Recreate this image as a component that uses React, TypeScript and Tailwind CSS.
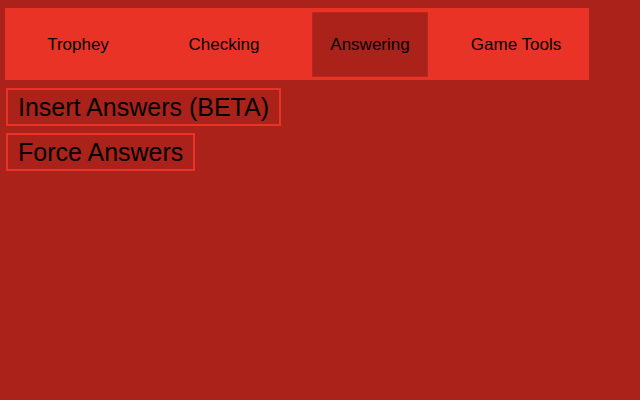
const tabs = ["Trophey", "Checking", "Answering", "Game Tools"];

export default function App() {
    const active = "Answering";

    return (
        <div className="w-[640px] h-[400px] bg-[#aa221a] pt-2 pl-[5px] font-['Liberation_Sans',Arial,sans-serif] text-black">
            <nav className="w-[584px] h-[72px] bg-[#ea3327] flex items-center gap-[30px] px-[15px]">
                {tabs.map((tab) => (
                    <div
                        key={tab}
                        className={
                            "w-[116px] h-[65px] flex items-center justify-center text-[17px] pt-[2px] " +
                            (tab === active ? "bg-[#aa221a] border border-[#b8271e]" : "")
                        }
                    >
                        {tab}
                    </div>
                ))}
            </nav>

            <div className="flex flex-col items-start gap-[7px] mt-2 -ml-[4px] pl-[5px]">
                <button className="h-[38px] border-2 border-[#ea3327] px-[10px] text-[25px] leading-none">
                    Insert Answers (BETA)
                </button>
                <button className="h-[38px] border-2 border-[#ea3327] px-[10px] text-[25px] leading-none">
                    Force Answers
                </button>
            </div>
        </div>
    );
}
